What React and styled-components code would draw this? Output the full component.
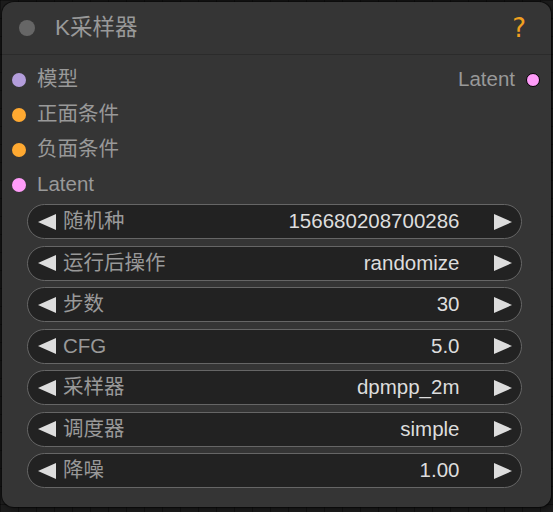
import React from "react";
import styled, { createGlobalStyle } from "styled-components";

const GlobalStyle = createGlobalStyle`
  html, body {
    margin: 0;
    padding: 0;
    background-color: #1d1d1d;
    background-image:
      linear-gradient(rgba(0,0,0,0.35) 1px, transparent 1px),
      linear-gradient(90deg, rgba(0,0,0,0.35) 1px, transparent 1px);
    background-size: 18px 18px;
    width: 553px;
    height: 512px;
    overflow: hidden;
  }
  * { box-sizing: border-box; }
`;

const FONT = `"Liberation Sans", Arial, "Noto Sans CJK SC", sans-serif`;

const Node = styled.div`
  margin: 2px 0 0 2px;
  width: 549px;
  height: 505px;
  background: #353535;
  border-radius: 12px;
  box-shadow: 0 0 0 1px rgba(0, 0, 0, 0.45), 2px 2px 6px rgba(0, 0, 0, 0.5);
  display: flex;
  flex-direction: column;
  font-family: ${FONT};
  overflow: hidden;
`;

const TitleBar = styled.div`
  height: 53px;
  flex: none;
  display: flex;
  align-items: center;
  padding: 0 25px 0 17px;
  border-bottom: 1px solid #2b2b2b;
  gap: 20px;
`;

const TitleDot = styled.span`
  width: 16px;
  height: 16px;
  border-radius: 50%;
  background: #666;
  flex: none;
`;

const TitleText = styled.span`
  flex: 1;
  color: #999;
  font-size: 22.5px;
  line-height: 1;
  white-space: nowrap;
`;

const Help = styled.span`
  color: #f0a020;
  font-size: 26px;
  line-height: 1;
  font-family: "DejaVu Sans", ${FONT};
`;

const Body = styled.div`
  display: flex;
  flex-direction: column;
  padding-top: 7px;
`;

const SlotRow = styled.div`
  height: 35px;
  display: flex;
  align-items: center;
  justify-content: space-between;
  padding: 0 11px 0 10px;
`;

const Slot = styled.div`
  display: flex;
  align-items: center;
  gap: 11px;
  flex-direction: ${(p) => (p.$output ? "row-reverse" : "row")};
  color: #999;
  font-size: 20.5px;
  line-height: 1;
  white-space: nowrap;
`;

const SlotDot = styled.span`
  width: 14px;
  height: 14px;
  border-radius: 50%;
  flex: none;
  background: ${(p) => p.$color};
  border: ${(p) => (p.$output ? "1.5px solid #000" : "none")};
`;

const Widgets = styled.div`
  display: flex;
  flex-direction: column;
  gap: 6.5px;
  padding: 0 29px 0 24.5px;
  margin-top: 2px;
`;

const Widget = styled.div`
  height: 35px;
  display: flex;
  align-items: center;
  background: #222;
  border: 1px solid #666;
  border-radius: 18px;
  padding: 0 9.5px 0 10px;
  font-size: 20.5px;
  line-height: 1;
`;

const Arrow = styled.svg`
  width: 18px;
  height: 16px;
  flex: none;
  fill: #ddd;
`;

const WLabel = styled.span`
  color: #999;
  margin-left: 7.5px;
  flex: 1;
  white-space: nowrap;
`;

const WValue = styled.span`
  color: #ddd;
  margin-right: 34px;
  white-space: nowrap;
`;

const LeftArrow = () => (
  <Arrow viewBox="0 0 18 16">
    <polygon points="18,0 18,16 0,8" />
  </Arrow>
);
const RightArrow = () => (
  <Arrow viewBox="0 0 18 16">
    <polygon points="0,0 0,16 18,8" />
  </Arrow>
);

const inputs = [
  { label: "模型", color: "#b39ddb" },
  { label: "正面条件", color: "#ffa931" },
  { label: "负面条件", color: "#ffa931" },
  { label: "Latent", color: "#ff9cf9" },
];

const widgets = [
  { label: "随机种", value: "156680208700286" },
  { label: "运行后操作", value: "randomize" },
  { label: "步数", value: "30" },
  { label: "CFG", value: "5.0" },
  { label: "采样器", value: "dpmpp_2m" },
  { label: "调度器", value: "simple" },
  { label: "降噪", value: "1.00" },
];

export default function App() {
  return (
    <>
      <GlobalStyle />
      <Node>
        <TitleBar>
          <TitleDot />
          <TitleText>K采样器</TitleText>
          <Help>?</Help>
        </TitleBar>
        <Body>
          {inputs.map((inp, i) => (
            <SlotRow key={inp.label + i}>
              <Slot>
                <SlotDot $color={inp.color} />
                <span>{inp.label}</span>
              </Slot>
              {i === 0 && (
                <Slot $output>
                  <SlotDot $color="#ff9cf9" $output />
                  <span>Latent</span>
                </Slot>
              )}
            </SlotRow>
          ))}
          <Widgets>
            {widgets.map((w) => (
              <Widget key={w.label}>
                <LeftArrow />
                <WLabel>{w.label}</WLabel>
                <WValue>{w.value}</WValue>
                <RightArrow />
              </Widget>
            ))}
          </Widgets>
        </Body>
      </Node>
    </>
  );
}
